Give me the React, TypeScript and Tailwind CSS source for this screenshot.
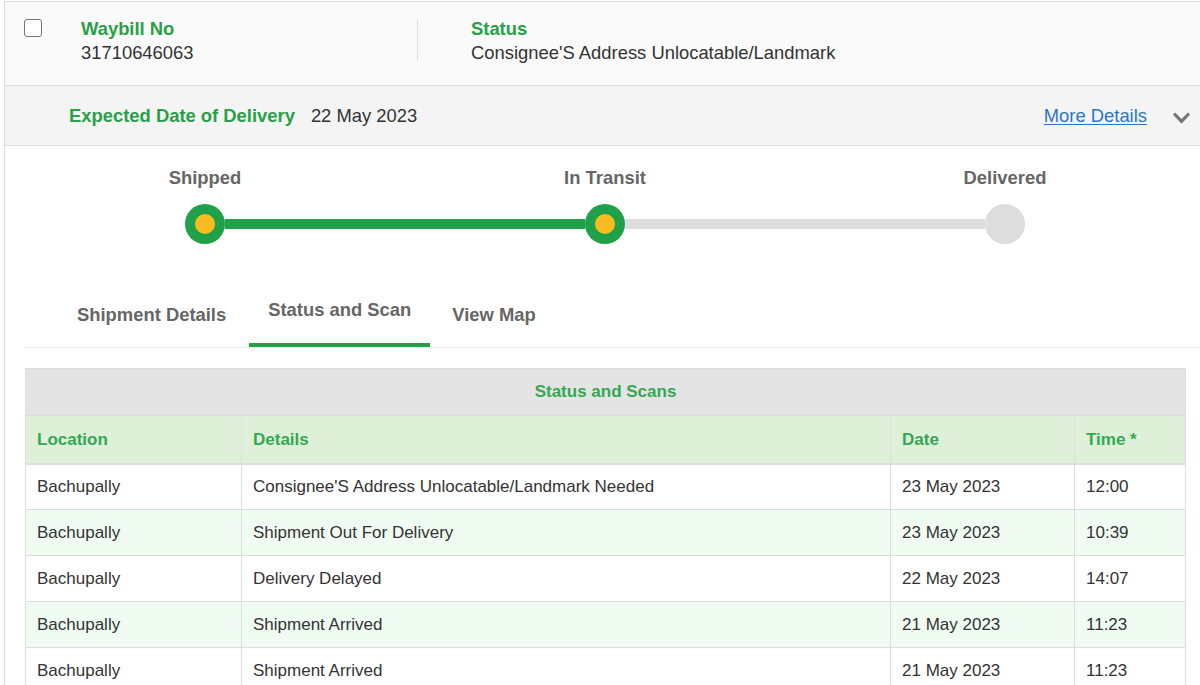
const scans = [
  { location: "Bachupally", details: "Consignee'S Address Unlocatable/Landmark Needed", date: "23 May 2023", time: "12:00" },
  { location: "Bachupally", details: "Shipment Out For Delivery", date: "23 May 2023", time: "10:39" },
  { location: "Bachupally", details: "Delivery Delayed", date: "22 May 2023", time: "14:07" },
  { location: "Bachupally", details: "Shipment Arrived", date: "21 May 2023", time: "11:23" },
  { location: "Bachupally", details: "Shipment Arrived", date: "21 May 2023", time: "11:23" },
];

function Step({ label, done, left, right }: { label: string; done: boolean; left?: string; right?: string }) {
  return (
    <div className="flex flex-col items-center">
      <div className="text-[18.4px] font-bold leading-5 text-[#666]">{label}</div>
      <div className="mt-[16px] flex w-full items-center">
        <div className={`h-[10px] flex-1 ${left ?? ""}`} />
        {done ? (
          <div className="flex h-10 w-10 items-center justify-center rounded-full bg-[#21a04a]">
            <div className="h-[20px] w-[20px] rounded-full bg-[#fbbb1f]" />
          </div>
        ) : (
          <div className="h-10 w-10 rounded-full bg-[#dddddd]" />
        )}
        <div className={`h-[10px] flex-1 ${right ?? ""}`} />
      </div>
    </div>
  );
}

export default function App() {
  return (
    <div className="h-[685px] w-[1200px] overflow-hidden bg-white pl-[4px] pt-[1px] font-['Liberation_Sans',Arial,sans-serif] text-[#333]">
      <div className="w-[1210px] border-l border-t border-[#dddddd]">
        {/* header */}
        <div className="flex h-[83px] items-start bg-[#fafafa] pt-[15px]">
          <div className="ml-[19px] mt-[2px] h-[18px] w-[18px] rounded-[3px] border border-[#767676] bg-white" />
          <div className="ml-[39px] w-[336px] leading-6">
            <div className="text-[18.4px] font-bold text-[#27a048]">Waybill No</div>
            <div className="text-[18.4px]">31710646063</div>
          </div>
          <div className="mt-[2px] h-[42px] border-l border-[#dddddd]" />
          <div className="pl-[53px] leading-6">
            <div className="text-[18.4px] font-bold text-[#27a048]">Status</div>
            <div className="text-[18.4px]">Consignee'S Address Unlocatable/Landmark</div>
          </div>
        </div>

        <div className="flex h-[61px] items-center border-y border-[#dddddd] bg-[#f4f4f4] pr-[24px]">
          <span className="ml-[64px] text-[18.4px] font-bold text-[#27a048]">Expected Date of Delivery</span>
          <span className="ml-[16px] text-[18.4px]">22 May 2023</span>
          <a href="#" className="ml-auto mr-[26px] text-[18.4px] text-[#2a78c2] underline underline-offset-2">
            More Details
          </a>
          <svg viewBox="0 0 448 512" className="mt-[4px] h-[20px] w-[17px] text-[#777]" fill="currentColor" preserveAspectRatio="none">
            <path d="M207.029 381.476L12.686 187.132c-9.373-9.373-9.373-24.569 0-33.941l22.667-22.667c9.357-9.357 24.522-9.375 33.901-.04L224 284.505l154.745-154.021c9.379-9.335 24.544-9.317 33.901.04l22.667 22.667c9.373 9.373 9.373 24.569 0 33.941L240.971 381.476c-9.373 9.372-24.569 9.372-33.942 0z" />
          </svg>
        </div>

        {/* progress */}
        <div className="grid w-[1200px] grid-cols-3 pt-[22px]">
          <Step label="Shipped" done right="bg-[#21a04a]" />
          <Step label="In Transit" done left="bg-[#21a04a]" right="bg-[#dddddd]" />
          <Step label="Delivered" done={false} left="bg-[#dddddd]" />
        </div>

        {/* tabs */}
        <div className="ml-[19px] mt-[56px] flex items-end border-b border-[#eeeeee] text-[18.4px] font-bold text-[#666]">
          <div className="pb-[22px] pl-[53px] leading-5">Shipment Details</div>
          <div className="ml-[23px] border-b-4 border-[#21a04a] px-[19px] pb-[23px] leading-5">Status and Scan</div>
          <div className="ml-[22px] pb-[22px] leading-5">View Map</div>
        </div>

        {/* table */}
        <table className="ml-[20px] mt-[20px] w-[1160px] table-fixed border-collapse text-[17px]">
          <colgroup>
            <col className="w-[216px]" />
            <col className="w-[649px]" />
            <col className="w-[184px]" />
            <col className="w-[111px]" />
          </colgroup>
          <thead>
            <tr className="h-[47px] bg-[#e4e4e4]">
              <th colSpan={4} className="border border-[#dddddd] text-center font-bold text-[#34a853]">
                Status and Scans
              </th>
            </tr>
            <tr className="h-[48px] bg-[#dff0d8]">
              {["Location", "Details", "Date", "Time *"].map((h) => (
                <th key={h} className="border border-b-2 border-[#dddddd] px-[11px] text-left font-bold text-[#34a853]">
                  {h}
                </th>
              ))}
            </tr>
          </thead>
          <tbody>
            {scans.map((s, i) => (
              <tr key={i} className={`h-[46px] ${i % 2 === 1 ? "bg-[#f0fcf2]" : "bg-white"}`}>
                <td className="border border-[#dddddd] px-[11px]">{s.location}</td>
                <td className="border border-[#dddddd] px-[11px]">{s.details}</td>
                <td className="border border-[#dddddd] px-[11px]">{s.date}</td>
                <td className="border border-[#dddddd] px-[11px]">{s.time}</td>
              </tr>
            ))}
          </tbody>
        </table>
      </div>
    </div>
  );
}
